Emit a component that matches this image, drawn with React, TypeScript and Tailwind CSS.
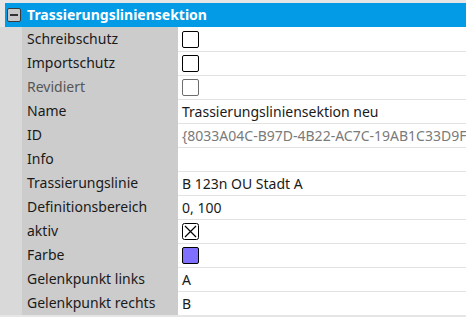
import React from "react";

type Row = {
  label: string;
  kind: "check" | "text" | "cross" | "color";
  value?: string;
  disabled?: boolean;
  muted?: boolean;
};

const rows: Row[] = [
  { label: "Schreibschutz", kind: "check" },
  { label: "Importschutz", kind: "check" },
  { label: "Revidiert", kind: "check", disabled: true },
  { label: "Name", kind: "text", value: "Trassierungsliniensektion neu" },
  { label: "ID", kind: "text", value: "{8033A04C-B97D-4B22-AC7C-19AB1C33D9F1}", muted: true },
  { label: "Info", kind: "text", value: "" },
  { label: "Trassierungslinie", kind: "text", value: "B 123n OU Stadt A" },
  { label: "Definitionsbereich", kind: "text", value: "0, 100" },
  { label: "aktiv", kind: "cross" },
  { label: "Farbe", kind: "color" },
  { label: "Gelenkpunkt links", kind: "text", value: "A" },
  { label: "Gelenkpunkt rechts", kind: "text", value: "B" },
];

function Value({ row }: { row: Row }) {
  if (row.kind === "check") {
    return (
      <div
        className={`w-[17px] h-[17px] rounded-[2px] border bg-white ${row.disabled ? "border-[#6d6d6d]" : "border-black"}`}
      />
    );
  }
  if (row.kind === "cross") {
    return (
      <svg width="17" height="17" viewBox="0 0 17 17">
        <rect x="0.5" y="0.5" width="16" height="16" rx="2" fill="white" stroke="black" />
        <path d="M3 3 L14 14 M14 3 L3 14" stroke="black" strokeWidth="1.2" />
      </svg>
    );
  }
  if (row.kind === "color") {
    return <div className="w-[17px] h-[17px] rounded-[2px] border border-black bg-[#8070ff]" />;
  }
  return (
    <span className={`whitespace-nowrap ${row.muted ? "text-[#7a7a7a]" : "text-[#1a1a1a]"}`}>{row.value}</span>
  );
}

export default function App() {
  return (
    <div
      className="w-[466px] h-[317px] overflow-hidden bg-[#e6e6e6] pt-[3px] text-[14px] leading-none"
      style={{ fontFamily: '"Noto Sans", "Open Sans", sans-serif' }}
    >
      {/* Kopfzeile */}
      <div className="ml-[5px] h-[24px] bg-[#039be5] flex items-center pl-[2px]">
        <div className="w-[14px] h-[14px] rounded-[2px] border border-[#3a3a3a] bg-[#c8c8c8] flex items-center justify-center">
          <div className="w-[8px] h-[2px] bg-[#333]" />
        </div>
        <span className="ml-[6px] text-white font-bold text-[14px] whitespace-nowrap">Trassierungsliniensektion</span>
      </div>

      {/* Eigenschaften */}
      <div>
        {rows.map((row, i) => (
          <div key={i} className="flex h-[24px]">
            <div className="w-[22px] bg-[#d9d9d9] shrink-0" />
            <div
              className={`w-[156px] shrink-0 bg-[#cccccc] flex items-center pl-[5px] whitespace-nowrap ${row.disabled ? "text-[#555]" : "text-[#1a1a1a]"}`}
            >
              {row.label}
            </div>
            <div
              className={`flex-1 bg-white flex items-center pl-[4px] overflow-hidden ${i > 0 ? "border-t border-[#e2e2e2]" : ""}`}
            >
              <Value row={row} />
            </div>
          </div>
        ))}
      </div>
    </div>
  );
}
